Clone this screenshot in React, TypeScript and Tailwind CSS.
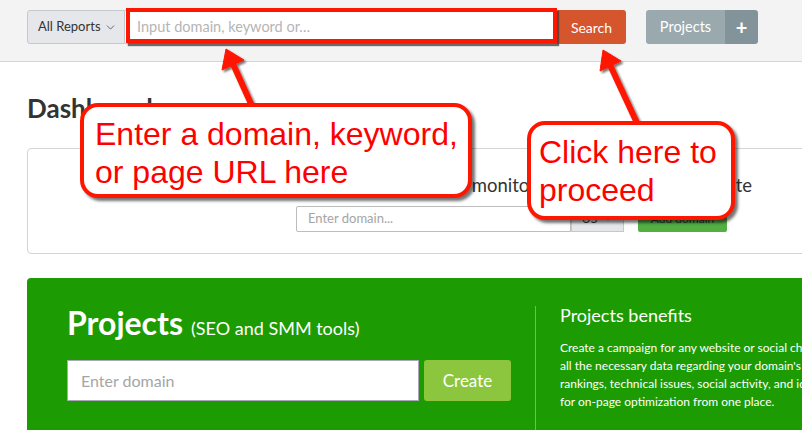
import { ChevronDown } from 'lucide-react';

const pageFont = { fontFamily: 'Lato, "Noto Sans", sans-serif' };

const Callout = ({ className, lines }: { className: string; lines: string[] }) => (
  <div
    className={`absolute bg-white border-4 border-[#ff1600] rounded-[18px] shadow-[3px_3px_3px_rgba(0,0,0,0.55)] text-[#ff0000] text-[32px] leading-[38px] ${className}`}
    style={{ fontFamily: '"Liberation Sans", Arial, sans-serif' }}
  >
    {lines.map((line) => (
      <div key={line} className="whitespace-nowrap">{line}</div>
    ))}
  </div>
);

const Header = () => (
  <div className="h-[62px] bg-[#f3f3f3] border-b border-[#d6d6d6] flex items-start pt-[10px] pl-[27px]">
    {/* report type select */}
    <div className="w-[98px] h-[34px] flex items-center justify-between pl-[10px] pr-[7px] bg-[#e5e7ea] border border-[#c5c9cd] rounded-l-[3px] text-[13px] text-[#333]">
      <span>All Reports</span>
      <ChevronDown className="w-[13px] h-[13px] text-[#666]" strokeWidth={1.8} />
    </div>

    {/* search input with annotation box */}
    <div className="relative w-[432px] h-[34px] bg-white border-y border-[#c5c9cd] flex items-center pl-[12px] text-[14.5px] text-[#b5b5b5]">
      Input domain, keyword or…
      <div className="absolute left-[1px] -top-[3px] w-[431px] h-[35px] border-4 border-[#ff1600] shadow-[2px_3px_1px_rgba(60,60,60,0.75)]" />
    </div>

    <button className="w-[69px] h-[34px] bg-[#d5552c] rounded-r-[3px] text-white text-[14px]">Search</button>

    <div className="ml-[20px] flex h-[34px] rounded-[3px] overflow-hidden text-white">
      <button className="w-[79px] bg-[#9aa9ae] text-[14.5px]">Projects</button>
      <button className="w-[33px] bg-[#83939a] text-[20px] font-bold leading-none">+</button>
    </div>
  </div>
);

const MonitorCard = () => (
  <div className="mt-[25px] w-[900px] h-[106px] bg-white border border-[#d4d4d4] rounded-[4px] pt-[24px]">
    <div className="w-[724px] text-right text-[18.5px] leading-[24px] text-[#333] whitespace-nowrap">
      Add your domain to monitor the health of your website
    </div>
    <div className="mt-[9px] pl-[268px] flex items-center">
      <div className="w-[275px] h-[26px] border border-[#bdbdbd] rounded-l-[2px] flex items-center pl-[11px] text-[13px] text-[#a5a5a5]">
        Enter domain...
      </div>
      <div className="w-[53px] h-[26px] bg-[#e4e6e9] border border-[#c5c9cd] flex items-center justify-center gap-[6px] text-[12px] text-[#333]">
        US <ChevronDown className="w-[10px] h-[10px]" />
      </div>
      <button className="ml-[14px] w-[89px] h-[26px] bg-[#52b043] rounded-[2px] text-[12px] text-[#333]">Add domain</button>
    </div>
  </div>
);

const ProjectsPanel = () => (
  <div className="mt-[24px] w-[900px] h-[160px] bg-[#1c9b03] rounded-tl-[4px] flex text-white">
    <div className="w-[508px] pl-[40px] pt-[27px]">
      <div className="flex items-baseline whitespace-nowrap">
        <span className="text-[32px] font-bold leading-[36px]">Projects</span>
        <span className="ml-[8px] text-[18px]">(SEO and SMM tools)</span>
      </div>
      <div className="mt-[18px] flex items-center">
        <div className="w-[352px] h-[41px] bg-white border border-[#a8a8b8] flex items-center pl-[13px] text-[16px] text-[#a5a5a5]">
          Enter domain
        </div>
        <button className="ml-[5px] w-[87px] h-[41px] bg-[#8cc63f] rounded-[3px] text-[17px]">Create</button>
      </div>
    </div>
    <div className="mt-[28px] w-px bg-[#6cc05a]" />
    <div className="pl-[24px] pt-[25px] whitespace-nowrap">
      <div className="text-[18px] leading-[24px]">Projects benefits</div>
      <div className="mt-[12px] text-[12px] leading-[18px]">
        <div>Create a campaign for any website or social channel and get</div>
        <div>all the necessary data regarding your domain's visibility,</div>
        <div>rankings, technical issues, social activity, and ideas</div>
        <div>for on-page optimization from one place.</div>
      </div>
    </div>
  </div>
);

const Arrows = () => (
  <svg className="absolute inset-0 pointer-events-none" width="802" height="430" viewBox="0 0 802 430">
    <defs>
      <filter id="arrowShadow" x="-20%" y="-20%" width="140%" height="140%">
        <feDropShadow dx="2" dy="2" stdDeviation="1.2" floodColor="#000" floodOpacity="0.55" />
      </filter>
    </defs>
    <g filter="url(#arrowShadow)" fill="#ff1600" stroke="#ff1600">
      <line x1="233" y1="64" x2="252" y2="106" strokeWidth="6" />
      <polygon points="226,49 244,60 222,70" strokeWidth="1" />
      <line x1="610" y1="65" x2="637" y2="123" strokeWidth="6" />
      <polygon points="603,50 621,61 600,71" strokeWidth="1" />
    </g>
  </svg>
);

export default function App() {
  return (
    <div className="relative w-[802px] h-[430px] overflow-hidden bg-white" style={pageFont}>
      <Header />
      <div className="pl-[27px]">
        <h1 className="mt-[31px] text-[26px] font-bold leading-[30px] text-[#333]">Dashboard</h1>
        <MonitorCard />
        <ProjectsPanel />
      </div>

      <Arrows />
      <Callout className="left-[80px] top-[103px] w-[392px] h-[95px] pl-[11px] pt-[8px]" lines={['Enter a domain, keyword,', 'or page URL here']} />
      <Callout className="left-[527px] top-[121px] w-[208px] h-[99px] pl-[8px] pt-[8px]" lines={['Click here to', 'proceed']} />
    </div>
  );
}
